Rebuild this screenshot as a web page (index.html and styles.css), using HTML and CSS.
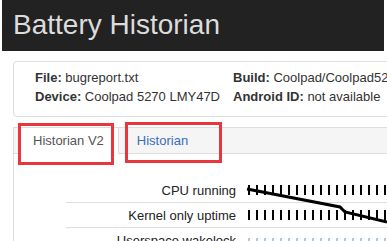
FILE: index.html
```html
<!DOCTYPE html>
<html lang="en">
<head>
  <meta charset="UTF-8">
  <title>Battery Historian</title>
  <link rel="stylesheet" href="styles.css">
</head>
<body>

<div class="cabecera">
  <h1>Battery Historian</h1>
</div>

<div class="tarjeta">
  <div class="columna">
    <div><b>File:</b> bugreport.txt</div>
    <div><b>Device:</b> Coolpad 5270 LMY47D</div>
  </div>
  <div class="columna">
    <div><b>Build:</b> Coolpad/Coolpad52</div>
    <div><b>Android ID:</b> not available</div>
  </div>
</div>

<div class="pestanas">
  <div class="barra">
    <div class="pestana activa">Historian V2</div>
    <div class="pestana">Historian</div>
  </div>
  <div class="marca marca-1"></div>
  <div class="marca marca-2"></div>

  <div class="grafico">
    <div class="fila">
      <div class="etiqueta">CPU running</div>
      <div class="marcas"></div>
    </div>
    <div class="fila">
      <div class="etiqueta">Kernel only uptime</div>
      <div class="marcas"></div>
    </div>
    <div class="fila">
      <div class="etiqueta">Userspace wakelock</div>
      <div class="marcas claras"></div>
    </div>
    <svg class="linea" width="373" height="90" viewBox="0 0 373 90">
      <polyline points="233,35 326,53 331,58 373,68" fill="none" stroke="#000" stroke-width="3"/>
    </svg>
  </div>
</div>

</body>
</html>
```

FILE: styles.css
```css
body {
  margin: 0;
  background: #fff;
  color: #333;
  font-family: "Liberation Sans", Arial, sans-serif;
  font-size: 13px;
  overflow: hidden;
}

.cabecera {
  margin: 0 3px 0 2px;
  height: 51px;
  background: #222;
}

.cabecera h1 {
  margin: 0;
  padding-left: 11px;
  font-size: 28px;
  font-weight: normal;
  line-height: 50px;
  color: #dcdcdc;
}

.tarjeta {
  display: flex;
  margin: 10px -40px 0 13px;
  padding: 6px 0 10px 21px;
  border: 1px solid #ddd;
  border-radius: 4px;
  line-height: 19px;
  white-space: nowrap;
}

.tarjeta .columna {
  flex: 0 0 198px;
}

.tarjeta .columna + .columna {
  flex: 1 0 auto;
}

.pestanas {
  position: relative;
  margin: 10px 0 0 13px;
  border-left: 1px solid #ddd;
  height: 200px;
}

.barra {
  display: flex;
  height: 25px;
  padding-left: 5px;
  background: #f5f5f5;
  border-top: 1px solid #ddd;
  border-bottom: 1px solid #ddd;
}

.pestana {
  padding: 0 14px 0 13px;
  line-height: 26px;
  color: #3b6db5;
}

.activa {
  height: 26px;
  margin-right: 5px;
  background: #fff;
  border-left: 1px solid #ddd;
  border-right: 1px solid #ddd;
  color: #555;
}

.marca {
  position: absolute;
  border: 3px solid #e8363c;
  box-sizing: border-box;
}

.marca-1 {
  left: 4px;
  top: -4px;
  width: 96px;
  height: 42px;
}

.marca-2 {
  left: 111px;
  top: -5px;
  width: 97px;
  height: 41px;
}

.grafico {
  position: relative;
  padding-top: 24px;
}

.fila {
  display: flex;
  align-items: center;
  height: 24px;
  margin-left: 52px;
  border-bottom: 1px solid #ddd;
}

.etiqueta {
  width: 170px;
  text-align: right;
  color: #222;
  white-space: nowrap;
}

.marcas {
  flex: 1;
  height: 10px;
  margin-left: 12px;
  background: repeating-linear-gradient(90deg, #000 0 2px, transparent 2px 8px);
}

.marcas.claras {
  height: 4px;
  background: repeating-linear-gradient(90deg, #a9c8e2 0 2px, transparent 2px 8px);
}

.linea {
  position: absolute;
  left: 0;
  top: 0;
}
```
